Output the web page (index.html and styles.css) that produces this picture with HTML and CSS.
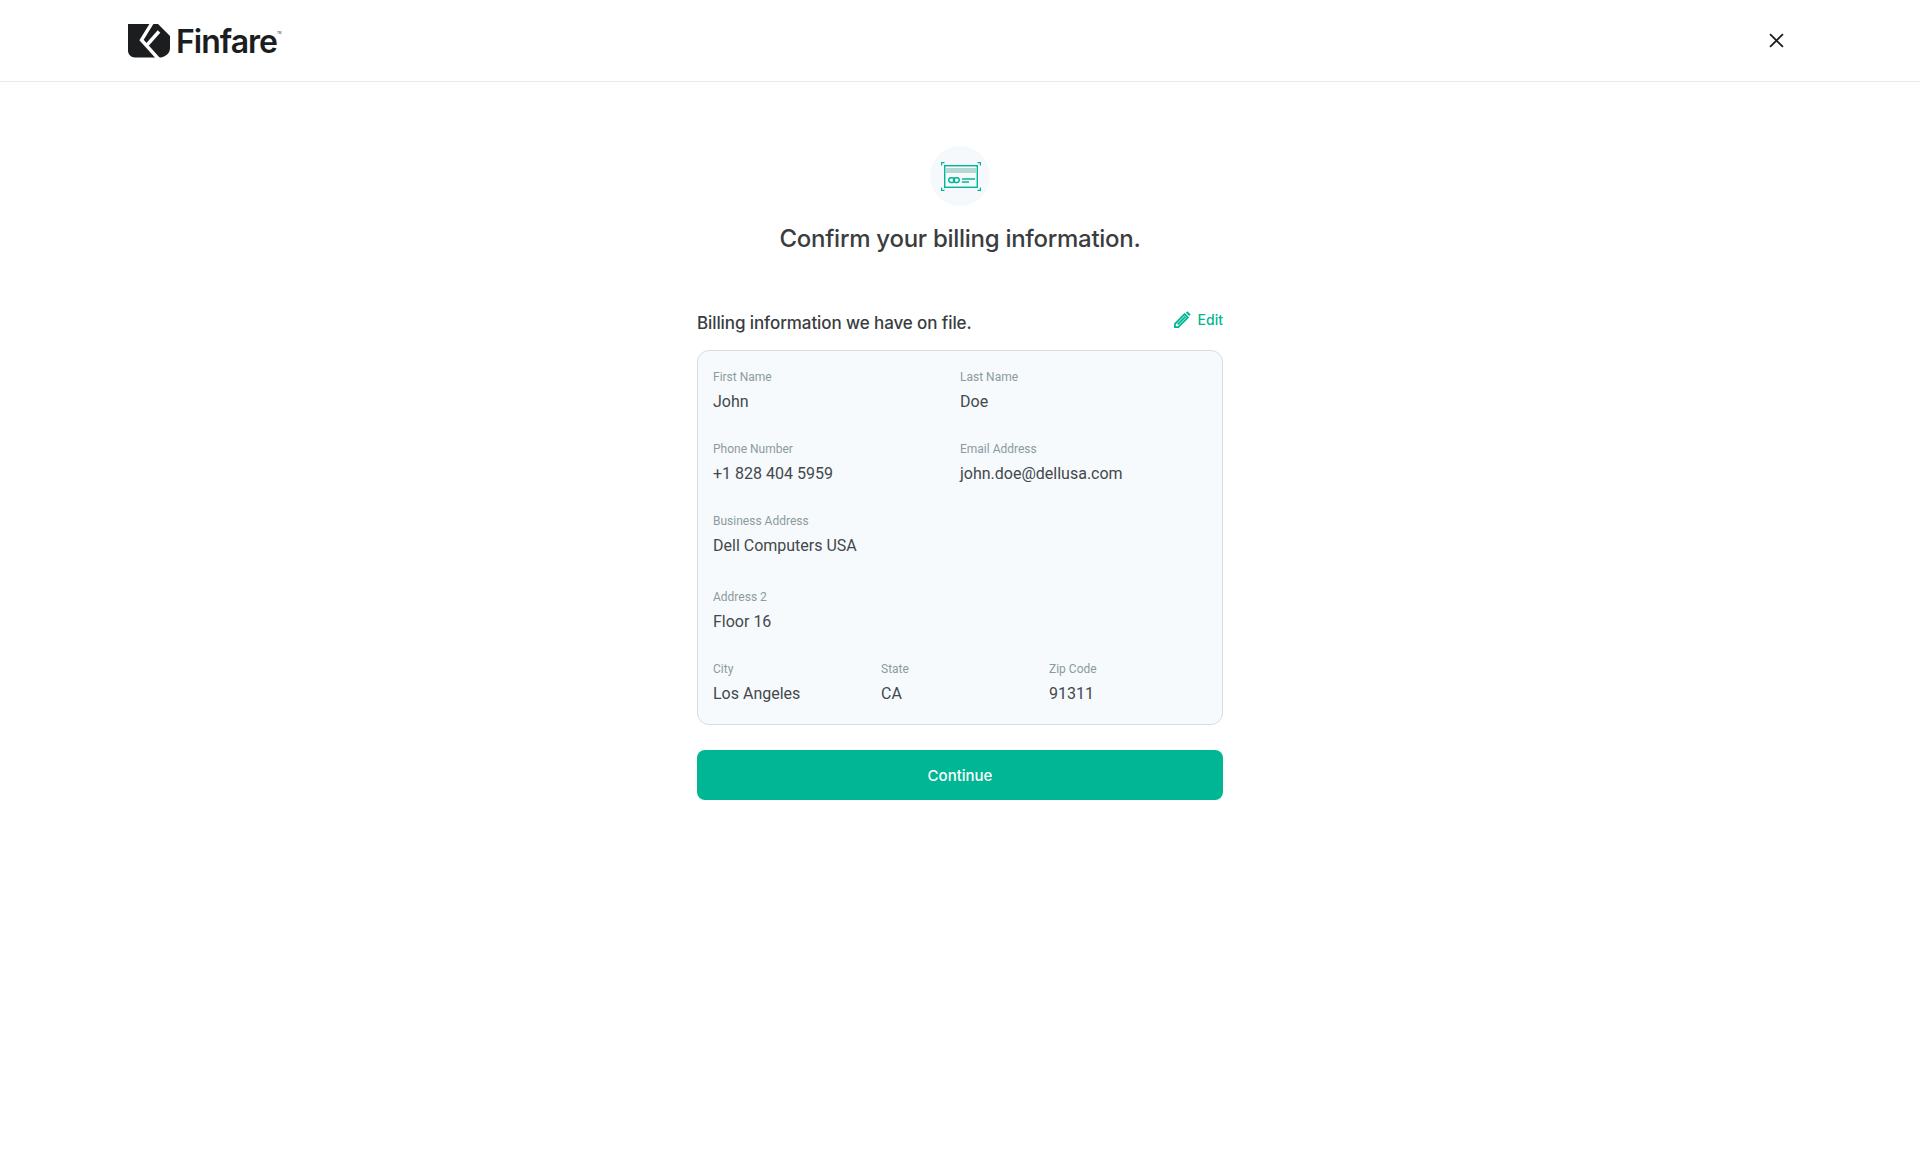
FILE: index.html
```html
<!DOCTYPE html>
<html lang="en">
<head>
<meta charset="utf-8">
<title>Finfare</title>
<link rel="stylesheet" href="styles.css">
</head>
<body>
<header class="topbar">
  <div class="brand">
    <svg class="brand-mark" viewBox="0 0 42 34" width="42" height="34">
      <path fill="#1b1d1f" d="M0 0H42V24C42 29 38 32.500 33 33.500H7C3 33.500 0 30.500 0 26.500Z"/>
      <path fill="none" stroke="#fff" stroke-width="3.400" d="M24 -1L13.500 16L31 35.500"/>
      <path fill="none" stroke="#fff" stroke-width="3.400" d="M31 7.500L19 21"/>
      <path fill="#fff" d="M29 -1H43V13Z"/>
    </svg>
    <span class="brand-name">Finfare</span><span class="brand-tm">TM</span>
  </div>
  <button class="close" aria-label="Close">
    <svg viewBox="0 0 14 14" width="15" height="15"><path d="M1 1L13 13M13 1L1 13" fill="none" stroke="#1b1d1f" stroke-width="1.700"/></svg>
  </button>
</header>
<main class="main">
  <div class="badge">
    <svg viewBox="0 0 40 29" width="40" height="29" class="badge-icon">
      <path fill="none" stroke="#00b695" stroke-width="1.200" d="M0.600 3.500V0.600H3.500M36.500 0.600H39.400V3.500M0.600 25.500V28.400H3.500M36.500 28.400H39.400V25.500"/>
      <rect x="3.700" y="3.700" width="32.600" height="21.600" fill="none" stroke="#00b695" stroke-width="1.400"/>
      <rect x="5" y="6" width="30" height="5" fill="#b6d6d0"/>
      <g fill="none" stroke="#00b695" stroke-width="1.400">
        <rect x="7.700" y="15.700" width="5.800" height="4.800" rx="2.400"/>
        <rect x="12.500" y="15.700" width="5.800" height="4.800" rx="2.400"/>
        <path d="M21 17H34M21 20H28"/>
      </g>
    </svg>
  </div>
  <h1 class="title">Confirm your billing information.</h1>
  <section class="panel">
    <div class="panel-head">
      <h2 class="subtitle">Billing information we have on file.</h2>
      <a class="edit" href="#">
        <svg viewBox="0 0 16 16" width="17" height="17"><path d="M0.900 15.100V12L10 2.900L13.100 6L4 15.100Z M3.500 12.500L10.800 5.200" fill="none" stroke="#00b695" stroke-width="1.700"/><path d="M11.200 1.700L12.700 0.300L15.700 3.300L14.300 4.800Z" fill="#00b695"/></svg>
        <span>Edit</span>
      </a>
    </div>
    <div class="card">
      <div class="row two">
        <div class="field"><div class="label">First Name</div><div class="value">John</div></div>
        <div class="field"><div class="label">Last Name</div><div class="value">Doe</div></div>
      </div>
      <div class="row two">
        <div class="field"><div class="label">Phone Number</div><div class="value">+1 828 404 5959</div></div>
        <div class="field"><div class="label">Email Address</div><div class="value">john.doe@dellusa.com</div></div>
      </div>
      <div class="row wide">
        <div class="field"><div class="label">Business Address</div><div class="value">Dell Computers USA</div></div>
      </div>
      <div class="row">
        <div class="field"><div class="label">Address 2</div><div class="value">Floor 16</div></div>
      </div>
      <div class="row three">
        <div class="field"><div class="label">City</div><div class="value">Los Angeles</div></div>
        <div class="field"><div class="label">State</div><div class="value">CA</div></div>
        <div class="field"><div class="label">Zip Code</div><div class="value">91311</div></div>
      </div>
    </div>
    <button class="continue">Continue</button>
  </section>
</main>
</body>
</html>
```
FILE: styles.css
```css
* { box-sizing: border-box; }
html, body { margin: 0; padding: 0; }
body { background: #fff; color: #3a3d40; font-family: "Roboto", sans-serif; height: 1150px; overflow: hidden; }
.topbar { height: 82px; border-bottom: 1px solid #e8e9ea; display: flex; align-items: center; justify-content: space-between; padding: 0 130px 1px 128px; }
.brand { display: flex; align-items: center; color: #1b1d1f; }
.brand-mark { display: block; margin-top: 2px; margin-right: 6px; }
.brand-name { font-family: "Inter", sans-serif; font-weight: 600; font-size: 32px; letter-spacing: -1px; line-height: 34px; position: relative; top: 2px; }
.brand-tm { font-family: "Inter", sans-serif; font-size: 3px; align-self: flex-start; margin-top: 9px; }
.close { width: 28px; height: 28px; padding: 0; border: 0; background: none; display: flex; align-items: center; justify-content: center; margin-top: 1px; }
.close svg { display: block; }
.main { display: flex; flex-direction: column; align-items: center; padding-top: 64px; }
.badge { width: 60px; height: 60px; border-radius: 50%; background: #f5f9fc; display: flex; align-items: center; justify-content: center; }
.badge-icon { display: block; margin-left: 2px; }
.title { margin: 17px 0 0; font-family: "Inter", sans-serif; font-weight: 500; font-size: 24px; line-height: 32px; letter-spacing: -0.28px; color: #3a3d40; }
.panel { width: 526px; margin-top: 50px; }
.panel-head { display: flex; justify-content: space-between; height: 45px; }
.subtitle { margin: 0; padding-top: 6px; font-family: "Inter", sans-serif; font-weight: 500; font-size: 17px; line-height: 24px; letter-spacing: -0.1px; color: #3a3d40; }
.edit { display: flex; align-items: flex-start; gap: 7px; color: #00b695; text-decoration: none; font-family: "Inter", sans-serif; font-weight: 500; font-size: 14px; line-height: 20px; padding-top: 5px; height: 26px; }
.edit svg { display: block; margin-top: 1px; }
.card { height: 375px; border: 1px solid #d8dce1; border-radius: 12px; background: #f6fafd; padding: 18px 15px 0; }
.row { height: 72px; }
.row.wide { height: 76px; }
.row.two { display: grid; grid-template-columns: 247px 1fr; }
.row.three { display: grid; grid-template-columns: 168px 168px 1fr; }
.label { font-size: 12px; line-height: 16px; color: #8c9a9c; }
.value { margin-top: 5px; font-size: 16px; line-height: 24px; color: #44484c; }
.continue { display: block; width: 100%; height: 50px; margin-top: 25px; border: 0; border-radius: 8px; background: #00b695; color: #fff; font-family: "Inter", sans-serif; font-weight: 500; font-size: 15px; }
```
